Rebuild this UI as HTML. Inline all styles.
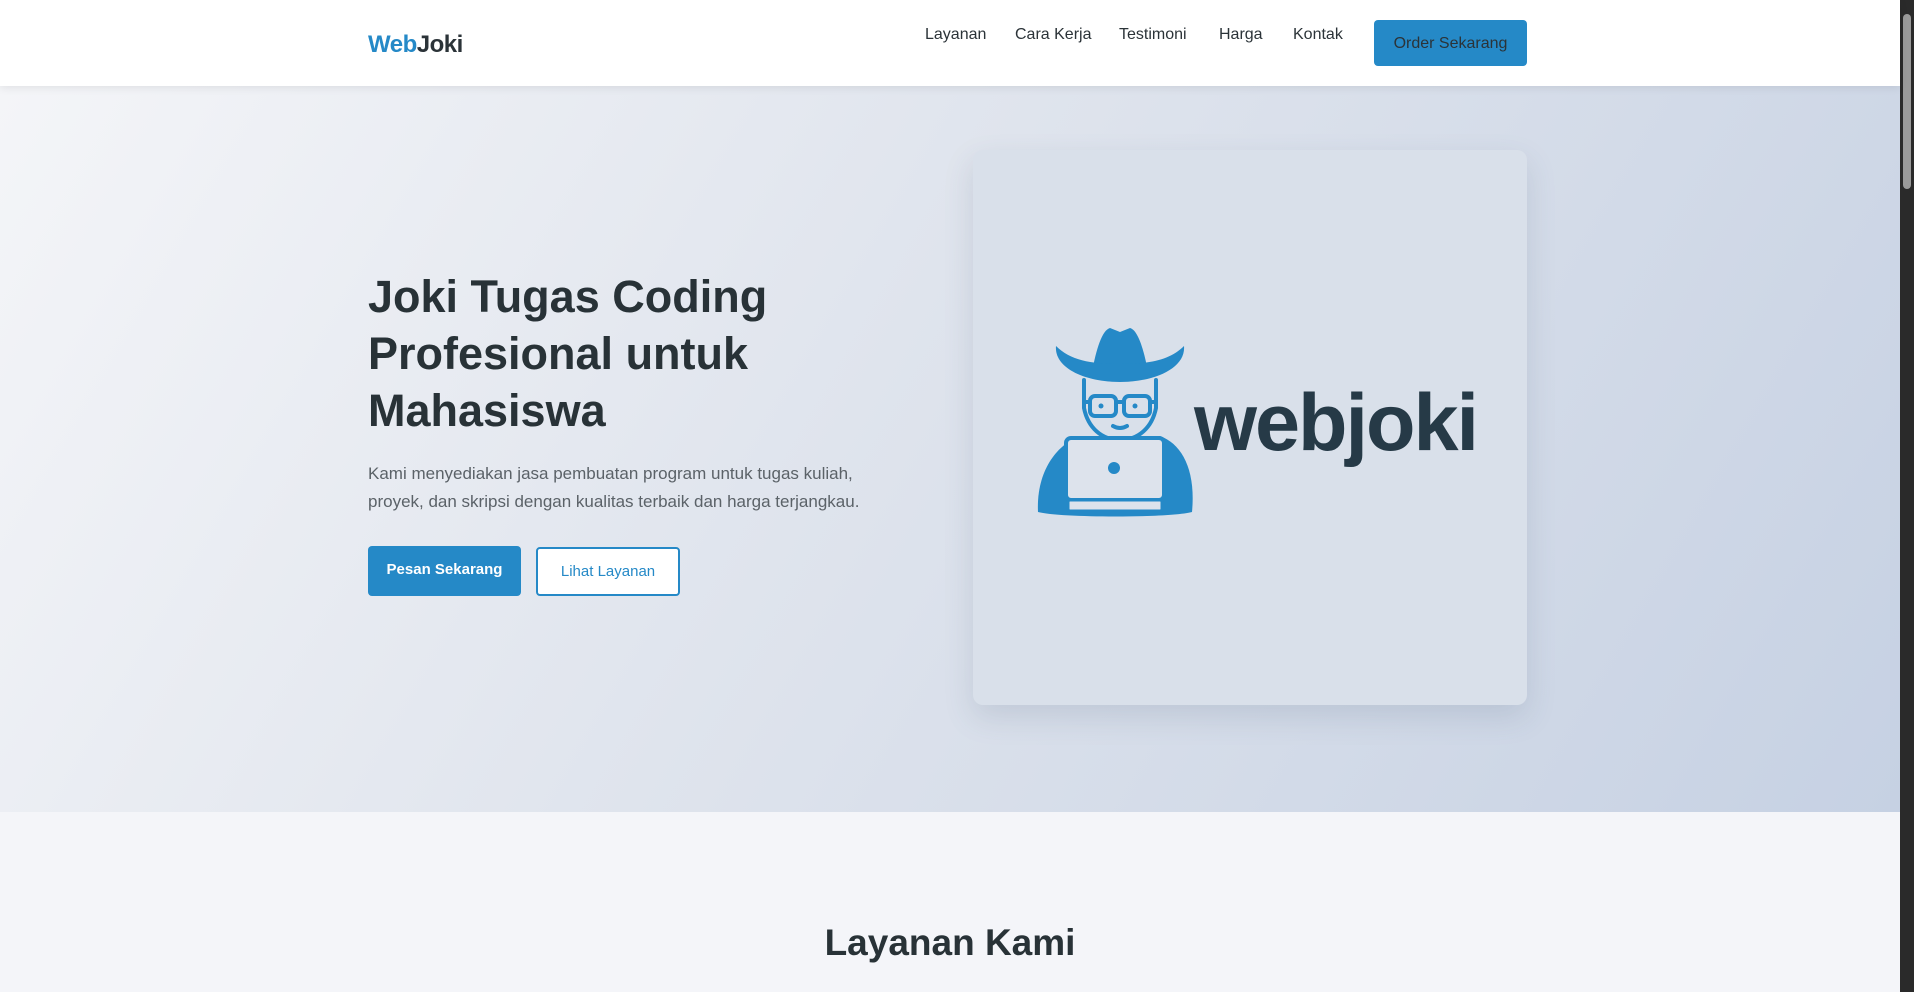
<!DOCTYPE html>
<html><head><meta charset="utf-8"><style>
*{margin:0;padding:0;box-sizing:border-box}
html,body{width:1914px;height:992px;overflow:hidden;font-family:"Liberation Sans",sans-serif;color:#2b3338}
.page{position:absolute;left:0;top:0;width:1900px;height:992px}
.sb{position:absolute;left:1900px;top:0;width:14px;height:992px;background:#2a2a2a}
.sb i{position:absolute;left:3px;top:14px;width:8px;height:175px;background:#9a9a9a;border-radius:4px}
nav{position:absolute;left:0;top:0;width:1900px;height:86px;background:#fff;box-shadow:0 2px 8px rgba(0,0,0,.08);z-index:2}
.logo{position:absolute;left:368px;top:31px;font-size:24px;font-weight:bold;letter-spacing:-0.5px}
.logo b{color:#2589c7}
.links a{position:absolute;top:26px;font-size:16px;color:#2b3338;text-decoration:none}
.ord{position:absolute;left:1374px;top:20px;width:153px;height:46px;background:#2589c7;border-radius:4px;font-size:16px;color:#2b3338;text-align:center;line-height:48px}
.hero{position:absolute;left:0;top:86px;width:1900px;height:726px;background:linear-gradient(120deg,#f4f5f8 0%,#dfe4ed 45%,#c6d1e3 100%)}
h1{position:absolute;left:368px;top:268px;font-size:45px;line-height:57px;font-weight:bold;color:#283237;width:480px}
.p{position:absolute;left:368px;top:460px;font-size:17px;line-height:28px;color:#5b6268;width:520px}
.b1{position:absolute;left:368px;top:546px;width:153px;height:50px;background:#2589c7;border-radius:4px;color:#fff;font-weight:bold;font-size:15px;text-align:center;line-height:48px}
.b2{position:absolute;left:536px;top:547px;width:144px;height:49px;background:#fff;border:2px solid #2589c7;border-radius:4px;color:#2589c7;font-size:15px;text-align:center;line-height:45px}
.card{position:absolute;left:973px;top:150px;width:554px;height:555px;background:#d9e0ea;border-radius:10px;box-shadow:0 12px 30px rgba(60,80,110,.15)}
.wj{position:absolute;left:1194px;top:377px;font-size:81px;font-weight:bold;color:#263a47;letter-spacing:-2px}
.sec{position:absolute;left:0;top:812px;width:1900px;height:180px;background:#f4f5f9}
.sec h2{position:absolute;left:0;width:1900px;top:110px;text-align:center;font-size:37px;font-weight:bold;color:#283237}
</style></head><body>
<div class="page">
<nav>
<div class="logo"><b>Web</b>Joki</div>
<div class="links">
<a style="left:925px">Layanan</a><a style="left:1015px">Cara Kerja</a><a style="left:1119px">Testimoni</a><a style="left:1219px">Harga</a><a style="left:1293px">Kontak</a>
</div>
<div class="ord">Order Sekarang</div>
</nav>
<div class="hero"></div>
<h1>Joki Tugas Coding Profesional untuk Mahasiswa</h1>
<div class="p">Kami menyediakan jasa pembuatan program untuk tugas kuliah, proyek, dan skripsi dengan kualitas terbaik dan harga terjangkau.</div>
<div class="b1">Pesan Sekarang</div>
<div class="b2">Lihat Layanan</div>
<div class="card"></div>
<svg style="position:absolute;left:1030px;top:320px" width="170" height="200" viewBox="0 0 170 200">
<g fill="#2589c7" stroke="none">
<path d="M62,52 C66,30 72,10 80,8 L90,12 L100,8 C108,10 114,30 118,52 Z"/>
<path d="M26,26 C24,48 55,62 90,62 C125,62 156,48 154,26 C140,40 120,44 90,44 C60,44 40,40 26,26 Z"/>
<path d="M8,192 C6,150 28,124 50,116 L130,116 C152,124 166,150 162,192 C140,198 30,198 8,192 Z"/>
</g>
<g fill="none" stroke="#2589c7" stroke-width="4" stroke-linecap="round" stroke-linejoin="round">
<path d="M54,60 L54,88 C58,108 72,120 90,120 C108,120 122,108 126,88 L126,60"/>
<rect x="60" y="76" width="26" height="20" rx="5"/><rect x="94" y="76" width="26" height="20" rx="5"/>
<path d="M86,82 L94,82 M54,82 L60,82 M120,82 L126,82"/>
<path d="M83,106 Q90,110 97,106"/>
</g>
<circle cx="71" cy="86" r="2.5" fill="#2589c7"/><circle cx="105" cy="86" r="2.5" fill="#2589c7"/>
<rect x="36" y="118" width="98" height="62" rx="5" fill="#dde3ec" stroke="#2589c7" stroke-width="4"/>
<rect x="38" y="180" width="94" height="11" rx="2" fill="#dde3ec" stroke="#2589c7" stroke-width="3"/>
<circle cx="84" cy="148" r="6" fill="#2589c7"/>
</svg>
<div class="wj">webjoki</div>
<div class="sec"><h2>Layanan Kami</h2></div>
</div>
<div class="sb"><i></i></div>
</body></html>
